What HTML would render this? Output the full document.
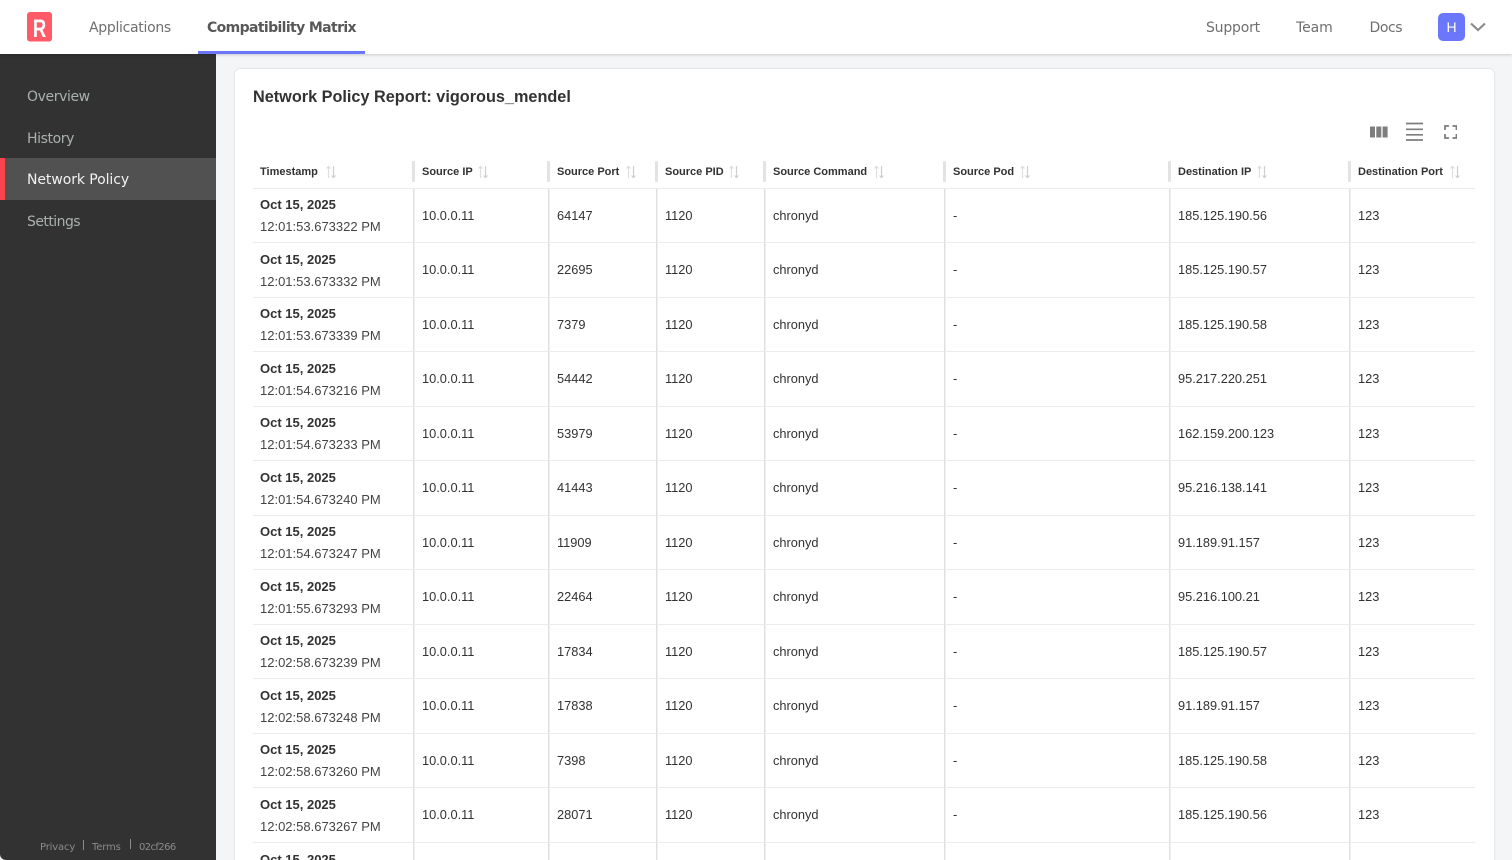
<!DOCTYPE html>
<html><head><meta charset="utf-8"><title>Network Policy</title>
<style>
*{box-sizing:border-box}
html,body{margin:0;padding:0;width:1512px;height:860px;overflow:hidden;background:#fff;font-family:"Liberation Sans",sans-serif;color:#323232}
#root{position:relative;width:1512px;height:860px;overflow:hidden;background:#f4f5f7}
.abs{position:absolute;white-space:nowrap}
#top{position:absolute;left:0;top:0;width:1512px;height:54px;background:#fff;box-shadow:0 1px 3px rgba(0,0,0,.18);z-index:3}
.nav{position:absolute;top:19px;font-family:"DejaVu Sans",sans-serif;font-size:14px;line-height:19px;color:#6f6f6f;white-space:nowrap;letter-spacing:-.3px}
#side{position:absolute;left:0;top:54px;width:216px;height:806px;background:#323232;border-bottom-left-radius:6px}
.si{position:absolute;left:27px;font-family:"DejaVu Sans",sans-serif;font-size:14px;line-height:20px;color:#a9b1ae;letter-spacing:-.4px;white-space:nowrap}
.foot{position:absolute;top:787px;font-family:"DejaVu Sans",sans-serif;font-size:10px;line-height:14px;color:#8b8b8b;white-space:nowrap;letter-spacing:-.15px}
#card{position:absolute;left:235px;top:69px;width:1259px;height:800px;background:#fff;border-radius:5px;box-shadow:0 0 2px rgba(0,0,0,.16)}
#title{position:absolute;left:253px;top:87px;font-size:16.25px;line-height:21px;font-weight:700;color:#323232;white-space:nowrap}
.th{position:absolute;top:165px;font-size:11px;line-height:15px;font-weight:700;color:#323232;white-space:nowrap}
.hb{position:absolute;top:161px;width:3px;height:21px;background:#e3e3e3;border-radius:1px}
.vl{position:absolute;top:189px;width:2px;height:671px;background:linear-gradient(90deg,#e0e0e0 50%,#f0f0f0 50%)}
.row{position:absolute;left:253px;width:1222px;height:55px;border-bottom:1px solid #ececec}
.c{position:absolute;font-size:12.8px;line-height:16px;color:#323232;white-space:nowrap;top:19px}
.o .c{top:20px}
.row .d{left:7px;top:8.500px;font-size:13px;font-weight:700;line-height:16px}
.row .t{left:7px;top:30.500px;font-size:13px;line-height:16px;color:#444}
.a{left:169px}.b{left:304px}.e{left:412px}.f{left:520px}.g{left:700px}.h{left:925px}.i{left:1105px}
svg{position:absolute;display:block}
</style></head><body><div id="root">
<div id="top">
<svg style="left:27px;top:12px" width="26" height="30" viewBox="0 0 26 30"><rect width="25" height="29.5" rx="3" fill="#ff5a67"/><text transform="translate(12.5,25) scale(.74,1)" text-anchor="middle" font-family="Liberation Sans" font-weight="700" font-size="25" fill="#fff">R</text></svg>
<div class="nav" style="left:89px">Applications</div>
<div class="nav" style="left:207px;font-weight:700;color:#585858;letter-spacing:-.62px">Compatibility Matrix</div>
<div class="abs" style="left:198px;top:51px;width:167px;height:3px;background:#6a77fb"></div>
<div class="nav" style="left:1206px;letter-spacing:-.2px">Support</div>
<div class="nav" style="left:1296px;letter-spacing:-.1px">Team</div>
<div class="nav" style="left:1369.500px;letter-spacing:-.45px">Docs</div>
<div class="abs" style="left:1438px;top:13px;width:27px;height:28px;background:#6a77fb;border-radius:5px;color:#fff;font-size:14px;line-height:28px;text-align:center">H</div>
<svg style="left:1470px;top:22px" width="16" height="10" viewBox="0 0 16 10"><path d="M1 1.500L8 8L15 1.500" fill="none" stroke="#8c8c8c" stroke-width="2.200"/></svg>
</div>
<div id="side">
<div class="si" style="top:33px">Overview</div>
<div class="si" style="top:75px">History</div>
<div class="abs" style="left:0;top:104px;width:216px;height:42px;background:#515151;border-left:5px solid #f8444f"></div>
<div class="si" style="top:116px;color:#f2f2f2;letter-spacing:-.08px">Network Policy</div>
<div class="si" style="top:158px;letter-spacing:-.55px">Settings</div>
<div class="foot" style="left:40px">Privacy</div>
<div class="abs" style="left:83px;top:786px;width:1px;height:10px;background:#8b8b8b"></div>
<div class="foot" style="left:92px">Terms</div>
<div class="abs" style="left:130px;top:785px;width:1px;height:10px;background:#8b8b8b"></div>
<div class="foot" style="left:139px;letter-spacing:-.6px">02cf266</div>
</div>
<div id="card"></div>
<div id="title">Network Policy Report: vigorous_mendel</div>
<svg style="left:1370px;top:126px" width="18" height="12" viewBox="0 0 18 12"><path d="M0 0.500h5v11H0zM6.300 0.500h5v11h-5zM12.600 0.500h5v11h-5z" fill="#7d7d7d"/></svg>
<svg style="left:1405px;top:122px" width="18" height="19" viewBox="0 0 18 19"><path d="M1 1.500h17M1 7.300h17M1 12.800h17M1 18h17" stroke="#7d7d7d" stroke-width="1.700" fill="none"/></svg>
<svg style="left:1444px;top:125px" width="13" height="14" viewBox="0 0 13 14"><path d="M1 5V1h4M8.500 1H12.500V5M12.500 9V13H8.500M5 13H1V9" fill="none" stroke="#7d7d7d" stroke-width="1.800"/></svg>

<div class="th" style="left:260px">Timestamp</div>
<div class="th" style="left:422px">Source IP</div>
<div class="th" style="left:557px">Source Port</div>
<div class="th" style="left:665px">Source PID</div>
<div class="th" style="left:773px">Source Command</div>
<div class="th" style="left:953px">Source Pod</div>
<div class="th" style="left:1178px">Destination IP</div>
<div class="th" style="left:1358px">Destination Port</div>
<svg style="left:325px;top:165px" width="12" height="14" viewBox="0 0 12 14"><path d="M3.500 13V1.500M1.500 3.500L3.500 1.500L5.500 3.500" fill="none" stroke="#dedede" stroke-width="1.200"/><path d="M8.500 1V12.500M6.500 10.500L8.500 12.500L10.500 10.500" fill="none" stroke="#cfcfcf" stroke-width="1.200"/></svg>
<svg style="left:477px;top:165px" width="12" height="14" viewBox="0 0 12 14"><path d="M3.500 13V1.500M1.500 3.500L3.500 1.500L5.500 3.500" fill="none" stroke="#dedede" stroke-width="1.200"/><path d="M8.500 1V12.500M6.500 10.500L8.500 12.500L10.500 10.500" fill="none" stroke="#cfcfcf" stroke-width="1.200"/></svg>
<svg style="left:625px;top:165px" width="12" height="14" viewBox="0 0 12 14"><path d="M3.500 13V1.500M1.500 3.500L3.500 1.500L5.500 3.500" fill="none" stroke="#dedede" stroke-width="1.200"/><path d="M8.500 1V12.500M6.500 10.500L8.500 12.500L10.500 10.500" fill="none" stroke="#cfcfcf" stroke-width="1.200"/></svg>
<svg style="left:728px;top:165px" width="12" height="14" viewBox="0 0 12 14"><path d="M3.500 13V1.500M1.500 3.500L3.500 1.500L5.500 3.500" fill="none" stroke="#dedede" stroke-width="1.200"/><path d="M8.500 1V12.500M6.500 10.500L8.500 12.500L10.500 10.500" fill="none" stroke="#cfcfcf" stroke-width="1.200"/></svg>
<svg style="left:873px;top:165px" width="12" height="14" viewBox="0 0 12 14"><path d="M3.500 13V1.500M1.500 3.500L3.500 1.500L5.500 3.500" fill="none" stroke="#dedede" stroke-width="1.200"/><path d="M8.500 1V12.500M6.500 10.500L8.500 12.500L10.500 10.500" fill="none" stroke="#cfcfcf" stroke-width="1.200"/></svg>
<svg style="left:1019px;top:165px" width="12" height="14" viewBox="0 0 12 14"><path d="M3.500 13V1.500M1.500 3.500L3.500 1.500L5.500 3.500" fill="none" stroke="#dedede" stroke-width="1.200"/><path d="M8.500 1V12.500M6.500 10.500L8.500 12.500L10.500 10.500" fill="none" stroke="#cfcfcf" stroke-width="1.200"/></svg>
<svg style="left:1256px;top:165px" width="12" height="14" viewBox="0 0 12 14"><path d="M3.500 13V1.500M1.500 3.500L3.500 1.500L5.500 3.500" fill="none" stroke="#dedede" stroke-width="1.200"/><path d="M8.500 1V12.500M6.500 10.500L8.500 12.500L10.500 10.500" fill="none" stroke="#cfcfcf" stroke-width="1.200"/></svg>
<svg style="left:1449px;top:165px" width="12" height="14" viewBox="0 0 12 14"><path d="M3.500 13V1.500M1.500 3.500L3.500 1.500L5.500 3.500" fill="none" stroke="#dedede" stroke-width="1.200"/><path d="M8.500 1V12.500M6.500 10.500L8.500 12.500L10.500 10.500" fill="none" stroke="#cfcfcf" stroke-width="1.200"/></svg>

<div class="abs" style="left:253px;top:188px;width:1222px;height:1px;background:#ececec"></div>
<div class="row o" style="top:188px"><div class="c d">Oct 15, 2025</div><div class="c t">12:01:53.673322 PM</div><div class="c a">10.0.0.11</div><div class="c b">64147</div><div class="c e">1120</div><div class="c f">chronyd</div><div class="c g">-</div><div class="c h">185.125.190.56</div><div class="c i">123</div></div>
<div class="row" style="top:243px"><div class="c d">Oct 15, 2025</div><div class="c t">12:01:53.673332 PM</div><div class="c a">10.0.0.11</div><div class="c b">22695</div><div class="c e">1120</div><div class="c f">chronyd</div><div class="c g">-</div><div class="c h">185.125.190.57</div><div class="c i">123</div></div>
<div class="row o" style="top:297px"><div class="c d">Oct 15, 2025</div><div class="c t">12:01:53.673339 PM</div><div class="c a">10.0.0.11</div><div class="c b">7379</div><div class="c e">1120</div><div class="c f">chronyd</div><div class="c g">-</div><div class="c h">185.125.190.58</div><div class="c i">123</div></div>
<div class="row" style="top:352px"><div class="c d">Oct 15, 2025</div><div class="c t">12:01:54.673216 PM</div><div class="c a">10.0.0.11</div><div class="c b">54442</div><div class="c e">1120</div><div class="c f">chronyd</div><div class="c g">-</div><div class="c h">95.217.220.251</div><div class="c i">123</div></div>
<div class="row o" style="top:406px"><div class="c d">Oct 15, 2025</div><div class="c t">12:01:54.673233 PM</div><div class="c a">10.0.0.11</div><div class="c b">53979</div><div class="c e">1120</div><div class="c f">chronyd</div><div class="c g">-</div><div class="c h">162.159.200.123</div><div class="c i">123</div></div>
<div class="row" style="top:461px"><div class="c d">Oct 15, 2025</div><div class="c t">12:01:54.673240 PM</div><div class="c a">10.0.0.11</div><div class="c b">41443</div><div class="c e">1120</div><div class="c f">chronyd</div><div class="c g">-</div><div class="c h">95.216.138.141</div><div class="c i">123</div></div>
<div class="row o" style="top:515px"><div class="c d">Oct 15, 2025</div><div class="c t">12:01:54.673247 PM</div><div class="c a">10.0.0.11</div><div class="c b">11909</div><div class="c e">1120</div><div class="c f">chronyd</div><div class="c g">-</div><div class="c h">91.189.91.157</div><div class="c i">123</div></div>
<div class="row" style="top:570px"><div class="c d">Oct 15, 2025</div><div class="c t">12:01:55.673293 PM</div><div class="c a">10.0.0.11</div><div class="c b">22464</div><div class="c e">1120</div><div class="c f">chronyd</div><div class="c g">-</div><div class="c h">95.216.100.21</div><div class="c i">123</div></div>
<div class="row o" style="top:624px"><div class="c d">Oct 15, 2025</div><div class="c t">12:02:58.673239 PM</div><div class="c a">10.0.0.11</div><div class="c b">17834</div><div class="c e">1120</div><div class="c f">chronyd</div><div class="c g">-</div><div class="c h">185.125.190.57</div><div class="c i">123</div></div>
<div class="row" style="top:679px"><div class="c d">Oct 15, 2025</div><div class="c t">12:02:58.673248 PM</div><div class="c a">10.0.0.11</div><div class="c b">17838</div><div class="c e">1120</div><div class="c f">chronyd</div><div class="c g">-</div><div class="c h">91.189.91.157</div><div class="c i">123</div></div>
<div class="row o" style="top:733px"><div class="c d">Oct 15, 2025</div><div class="c t">12:02:58.673260 PM</div><div class="c a">10.0.0.11</div><div class="c b">7398</div><div class="c e">1120</div><div class="c f">chronyd</div><div class="c g">-</div><div class="c h">185.125.190.58</div><div class="c i">123</div></div>
<div class="row" style="top:788px"><div class="c d">Oct 15, 2025</div><div class="c t">12:02:58.673267 PM</div><div class="c a">10.0.0.11</div><div class="c b">28071</div><div class="c e">1120</div><div class="c f">chronyd</div><div class="c g">-</div><div class="c h">185.125.190.56</div><div class="c i">123</div></div>
<div class="row" style="top:843px;border-bottom:0"><div class="c d">Oct 15, 2025</div></div>

<div class="hb" style="left:412px"></div><div class="hb" style="left:547px"></div><div class="hb" style="left:655px"></div><div class="hb" style="left:763px"></div><div class="hb" style="left:943px"></div><div class="hb" style="left:1168px"></div><div class="hb" style="left:1348px"></div>
<div class="vl" style="left:413px"></div><div class="vl" style="left:548px"></div><div class="vl" style="left:656px"></div><div class="vl" style="left:764px"></div><div class="vl" style="left:944px"></div><div class="vl" style="left:1169px"></div><div class="vl" style="left:1349px"></div>
</div></body></html>
